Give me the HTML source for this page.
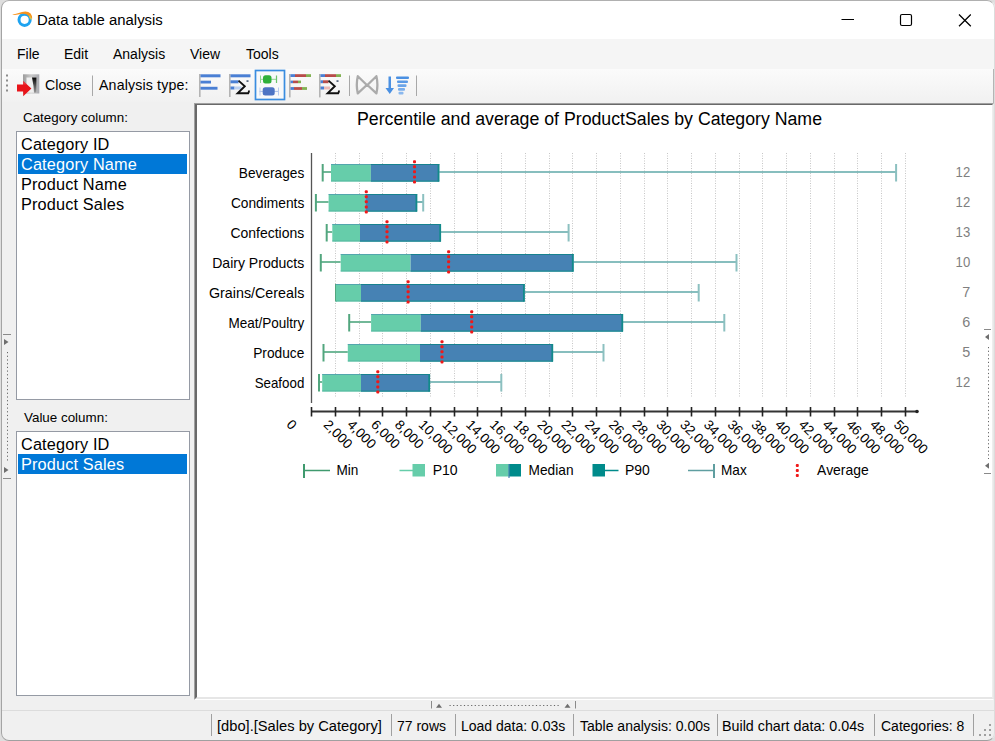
<!DOCTYPE html>
<html><head><meta charset="utf-8">
<style>
*{margin:0;padding:0;box-sizing:border-box}
html,body{width:995px;height:741px;overflow:hidden;background:#dedede}
body{font-family:"Liberation Sans",sans-serif;position:relative;color:#000;background:#dedede}
.a{position:absolute;white-space:nowrap}
#win{position:absolute;left:0;top:0;width:995px;height:741px;background:#f0f0f0;clip-path:inset(0 0 0 1px round 8px)}
#frame{position:absolute;left:1px;top:0;width:994px;height:741px;border:1px solid #a4a4a4;border-top-color:#b0b0b0;border-right-color:#dcdcdc;border-bottom-color:#a0a0a0;border-radius:8px;pointer-events:none}
#title{position:absolute;left:0;top:0;width:995px;height:39px;background:#fff}
#menu{position:absolute;left:0;top:39px;width:995px;height:30px;background:#f5f5f5}
#tool{position:absolute;left:0;top:69px;width:995px;height:33px;background:linear-gradient(#fbfbfb,#f1f1f1)}
.lb{position:absolute;background:#fff;border:1px solid #959aa4}
.it{position:absolute;left:1px;height:20px;width:169px;font-size:16.3px;line-height:20px;padding-left:3px;letter-spacing:0.15px}
.sel{background:#0078d7;color:#fff}
#status{position:absolute;left:0;top:710px;width:995px;height:31px;background:#f0f0f0;border-top:1px solid #dcdcdc}
.st{position:absolute;top:6px;font-size:14px;line-height:18px;color:#000}
.dv{position:absolute;top:3px;width:1px;height:22px;background:#a0a0a0}
</style></head><body>
<div id="win">
 <div id="title">
  <svg class="a" style="left:0;top:0" width="40" height="38" viewBox="0 0 40 38">
   <circle cx="24.6" cy="19.8" r="5.6" stroke="#1ea3f0" stroke-width="3" fill="none"/>
   <path d="M12.2 14.7 Q17 13.6 22 11.9 Q27.5 10.3 30.6 13.6 Q32.2 15.6 32.2 18.6 L29.6 18.2 Q29.2 15.6 26.8 14.4 Q23 13.2 18 14.6 Q14.5 15.4 12.2 14.7 Z" fill="#f7931e"/>
   <path d="M29.8 15.2 Q31.6 17 32 19.8 L29.9 19.2 Q29.6 17.2 28.8 16 Z" fill="#dcc94a" opacity="0.8"/>
  </svg>
  <div class="a" style="left:37px;top:11px;font-size:14.9px;line-height:18px">Data table analysis</div>
  <svg class="a" style="left:838px;top:12px" width="20" height="16"><line x1="3.5" y1="7.5" x2="16" y2="7.5" stroke="#000" stroke-width="1.1"/></svg>
  <svg class="a" style="left:896px;top:13px" width="20" height="16"><rect x="4.5" y="1.5" width="11" height="11" rx="1.5" stroke="#000" stroke-width="1.2" fill="none"/></svg>
  <svg class="a" style="left:955px;top:12px" width="20" height="18"><path d="M4 2.5 L15.8 14.3 M15.8 2.5 L4 14.3" stroke="#000" stroke-width="1.25"/></svg>
 </div>
 <div id="menu">
  <div class="a" style="left:17px;top:6px;font-size:14px;line-height:18px">File</div>
  <div class="a" style="left:64px;top:6px;font-size:14px;line-height:18px">Edit</div>
  <div class="a" style="left:113px;top:6px;font-size:14px;line-height:18px">Analysis</div>
  <div class="a" style="left:190px;top:6px;font-size:14px;line-height:18px">View</div>
  <div class="a" style="left:246px;top:6px;font-size:14px;line-height:18px">Tools</div>
 </div>
 <div id="tool">
  <svg class="a" style="left:0;top:-1px" width="500" height="34" viewBox="0 68 500 34">
   <g fill="#8c8c8c"><rect x="6" y="74.5" width="2" height="2"/><rect x="6" y="79.5" width="2" height="2"/><rect x="6" y="84.5" width="2" height="2"/><rect x="6" y="89.5" width="2" height="2"/></g>
   <!-- close icon -->
   <defs><linearGradient id="dg" x1="0" y1="0" x2="0" y2="1"><stop offset="0" stop-color="#050505"/><stop offset="1" stop-color="#9a9a9a"/></linearGradient>
   <linearGradient id="fg" x1="0" y1="0" x2="1" y2="0"><stop offset="0" stop-color="#9c9c9c"/><stop offset="0.5" stop-color="#c9c9c9"/><stop offset="1" stop-color="#a9aab0"/></linearGradient></defs>
   <rect x="23" y="74.3" width="16.3" height="19.2" fill="url(#fg)"/>
   <rect x="26.5" y="77.5" width="10" height="15.2" fill="#efefef"/>
   <path d="M32 77.5 L36.5 77.5 L36.5 92.7 L34 92.7 L33.5 86 Z" fill="url(#dg)"/>
   <path d="M17 84.6 L23.2 84.6 L23.2 81.1 L31.4 88.6 L23.2 96.2 L23.2 91.6 L17 91.6 Z" fill="#e8141a"/>
   <path d="M17 84.6 L23.2 84.6 L23.2 81.1 L27 84.6 Z" fill="#f04a50" opacity="0.6"/>
   <rect x="92" y="75.5" width="1" height="20.5" fill="#a8a8a8"/>
   <!-- icon1 -->
   <rect x="199" y="74" width="1.6" height="23" fill="#b4b4b4"/>
   <rect x="200.5" y="74.3" width="20" height="3" fill="#4a7fd4"/>
   <rect x="200.5" y="80.7" width="10.5" height="2.8" fill="#4a7fd4"/>
   <rect x="200.5" y="86.8" width="17" height="2.9" fill="#4a7fd4"/>
   <!-- icon2 -->
   <rect x="229" y="74" width="1.6" height="23" fill="#b4b4b4"/>
   <rect x="230.5" y="74.3" width="20" height="3" fill="#4a7fd4"/>
   <rect x="230.5" y="80.3" width="8" height="3" fill="#4a7fd4"/>
   <rect x="230.5" y="86.5" width="4" height="3" fill="#4a7fd4"/><rect x="234.5" y="86.5" width="7" height="3" fill="#bcd0f0"/>
   <path d="M238.5 80.6 L244.8 86.2 L237.6 93.3 L248.2 93.3 Q249 92 249 90.5" stroke="#111" stroke-width="1.9" fill="none" stroke-linejoin="miter"/>
   <rect x="246.5" y="80.2" width="2" height="1.8" fill="#5a6a80"/>
   <!-- icon3 selected -->
   <rect x="255.5" y="70.5" width="29" height="29" fill="#f8f9fa" stroke="#3a8de0" stroke-width="1.7"/>
   <line x1="260" y1="79.3" x2="277" y2="79.3" stroke="#8fd48f" stroke-width="1"/>
   <line x1="260.5" y1="75.5" x2="260.5" y2="83" stroke="#8fd48f" stroke-width="1"/>
   <line x1="276.5" y1="75.5" x2="276.5" y2="83" stroke="#6cc46c" stroke-width="1.2"/>
   <rect x="263" y="75.2" width="8.5" height="8.2" rx="2.5" fill="#2fb03a"/>
   <line x1="259.5" y1="91.4" x2="279" y2="91.4" stroke="#a8bfe8" stroke-width="1"/>
   <line x1="260" y1="87.5" x2="260" y2="95.5" stroke="#b9cbee" stroke-width="1"/>
   <line x1="278.5" y1="87.5" x2="278.5" y2="95.5" stroke="#b9cbee" stroke-width="1"/>
   <rect x="262.7" y="87.3" width="12" height="8.2" rx="2.5" fill="#4d74c4"/>
   <!-- icon4 -->
   <rect x="289" y="74" width="1.6" height="23.4" fill="#b4b4b4"/>
   <rect x="290.5" y="74.2" width="4.5" height="2.8" fill="#4a7fd4"/><rect x="295" y="74.2" width="11" height="2.8" fill="#b84c4a"/><rect x="306" y="74.2" width="5" height="2.8" fill="#82b253"/>
   <rect x="290.5" y="80.6" width="2.5" height="2.6" fill="#4a7fd4"/><rect x="293" y="80.6" width="5" height="2.6" fill="#b84c4a"/><rect x="298" y="80.6" width="3" height="2.6" fill="#82b253"/>
   <rect x="290.5" y="87.1" width="3.5" height="2.8" fill="#4a7fd4"/><rect x="294" y="87.1" width="8" height="2.8" fill="#b84c4a"/><rect x="302" y="87.1" width="5" height="2.8" fill="#82b253"/>
   <!-- icon5 -->
   <rect x="319" y="74" width="1.6" height="23.4" fill="#b4b4b4"/>
   <rect x="320.5" y="74.2" width="4.5" height="2.8" fill="#4a7fd4"/><rect x="325" y="74.2" width="11" height="2.8" fill="#b84c4a"/><rect x="336" y="74.2" width="5" height="2.8" fill="#82b253"/>
   <rect x="320.5" y="80.3" width="2.5" height="2.9" fill="#4a7fd4"/><rect x="323" y="80.3" width="5.5" height="2.9" fill="#b84c4a"/>
   <rect x="320.5" y="86.5" width="3.5" height="3" fill="#4a7fd4"/><rect x="324" y="86.5" width="6" height="3" fill="#ebb9b8"/>
   <path d="M328.5 80.6 L334.8 86.2 L327.6 93.3 L338.2 93.3 Q339 92 339 90.5" stroke="#111" stroke-width="1.9" fill="none" stroke-linejoin="miter"/>
   <rect x="336.5" y="80.2" width="2" height="1.8" fill="#5a6a80"/>
   <rect x="349" y="75.5" width="1" height="20.5" fill="#a8a8a8"/>
   <!-- icon6 -->
   <path d="M357.8 76.2 L366.8 85 L357.8 93.4 Q355.8 84.8 357.8 76.2 Z M376.4 76.2 L367.4 85 L376.4 93.4 Q378.4 84.8 376.4 76.2 Z" stroke="#ababab" stroke-width="2.3" fill="none" stroke-linejoin="round"/>
   <!-- icon7 -->
   <path d="M388.5 76.5 L391 76.5 L391 88 L394 88 L389.75 94 L385.5 88 L388.5 88 Z" fill="#4a90e2"/>
   <rect x="396" y="76.5" width="13" height="2.6" rx="1" fill="#4a90e2"/>
   <rect x="397" y="80.5" width="11" height="2.6" rx="1" fill="#5a9ae6"/>
   <rect x="397.5" y="84.3" width="9" height="2.6" rx="1" fill="#6aa4e9"/>
   <rect x="398" y="88.1" width="7" height="2.6" rx="1" fill="#7aaeeb"/>
   <rect x="398.5" y="91.8" width="5" height="2.6" rx="1" fill="#8ab8ee"/>
   <rect x="416" y="75.5" width="1" height="20.5" fill="#a8a8a8"/>
  </svg>
  <div class="a" style="left:45px;top:7px;font-size:14.2px;line-height:18px">Close</div>
  <div class="a" style="left:99px;top:7px;font-size:14.2px;line-height:18px;letter-spacing:0.15px">Analysis type:</div>
 </div>
 <div class="a" style="left:23px;top:109px;font-size:13.4px;line-height:17px;color:#000">Category column:</div>
 <div class="lb" style="left:16px;top:131px;width:174px;height:269px">
  <div class="it" style="top:2px">Category ID</div>
  <div class="it sel" style="top:22px">Category Name</div>
  <div class="it" style="top:42px">Product Name</div>
  <div class="it" style="top:62px">Product Sales</div>
 </div>
 <div class="a" style="left:24px;top:409px;font-size:13.4px;line-height:17px;color:#000">Value column:</div>
 <div class="lb" style="left:16px;top:431px;width:174px;height:265px">
  <div class="it" style="top:2px">Category ID</div>
  <div class="it sel" style="top:22px">Product Sales</div>
 </div>
 <div id="chart" class="a" style="left:194px;top:103px;width:800px;height:597px;background:#fff;border-top:1px solid #a0a0a0;border-left:1px solid #a0a0a0;border-right:1px solid #e8e8e8;border-bottom:1px solid #fff"><div style="position:absolute;left:0;top:0;right:0;bottom:0;border-top:1px solid #696969;border-left:2px solid #696969;border-right:1px solid #eeeeee;border-bottom:2px solid #e6e6e6"></div></div>
 <!--CHART-->
<svg class="a" style="left:0;top:0" width="995" height="741" viewBox="0 0 995 741" font-family="Liberation Sans, sans-serif">
<text x="357" y="124.6" font-size="17.6" textLength="465" lengthAdjust="spacingAndGlyphs" fill="#000">Percentile and average of ProductSales by Category Name</text>
<line x1="335.5" y1="153" x2="335.5" y2="398" stroke="#c6c6c6" stroke-width="1" stroke-dasharray="1,1.5"/>
<line x1="359.5" y1="153" x2="359.5" y2="398" stroke="#c6c6c6" stroke-width="1" stroke-dasharray="1,1.5"/>
<line x1="382.5" y1="153" x2="382.5" y2="398" stroke="#c6c6c6" stroke-width="1" stroke-dasharray="1,1.5"/>
<line x1="406.5" y1="153" x2="406.5" y2="398" stroke="#c6c6c6" stroke-width="1" stroke-dasharray="1,1.5"/>
<line x1="430.5" y1="153" x2="430.5" y2="398" stroke="#c6c6c6" stroke-width="1" stroke-dasharray="1,1.5"/>
<line x1="454.5" y1="153" x2="454.5" y2="398" stroke="#c6c6c6" stroke-width="1" stroke-dasharray="1,1.5"/>
<line x1="477.5" y1="153" x2="477.5" y2="398" stroke="#c6c6c6" stroke-width="1" stroke-dasharray="1,1.5"/>
<line x1="501.5" y1="153" x2="501.5" y2="398" stroke="#c6c6c6" stroke-width="1" stroke-dasharray="1,1.5"/>
<line x1="525.5" y1="153" x2="525.5" y2="398" stroke="#c6c6c6" stroke-width="1" stroke-dasharray="1,1.5"/>
<line x1="549.5" y1="153" x2="549.5" y2="398" stroke="#c6c6c6" stroke-width="1" stroke-dasharray="1,1.5"/>
<line x1="572.5" y1="153" x2="572.5" y2="398" stroke="#c6c6c6" stroke-width="1" stroke-dasharray="1,1.5"/>
<line x1="596.5" y1="153" x2="596.5" y2="398" stroke="#c6c6c6" stroke-width="1" stroke-dasharray="1,1.5"/>
<line x1="620.5" y1="153" x2="620.5" y2="398" stroke="#c6c6c6" stroke-width="1" stroke-dasharray="1,1.5"/>
<line x1="644.5" y1="153" x2="644.5" y2="398" stroke="#c6c6c6" stroke-width="1" stroke-dasharray="1,1.5"/>
<line x1="667.5" y1="153" x2="667.5" y2="398" stroke="#c6c6c6" stroke-width="1" stroke-dasharray="1,1.5"/>
<line x1="691.5" y1="153" x2="691.5" y2="398" stroke="#c6c6c6" stroke-width="1" stroke-dasharray="1,1.5"/>
<line x1="715.5" y1="153" x2="715.5" y2="398" stroke="#c6c6c6" stroke-width="1" stroke-dasharray="1,1.5"/>
<line x1="739.5" y1="153" x2="739.5" y2="398" stroke="#c6c6c6" stroke-width="1" stroke-dasharray="1,1.5"/>
<line x1="762.5" y1="153" x2="762.5" y2="398" stroke="#c6c6c6" stroke-width="1" stroke-dasharray="1,1.5"/>
<line x1="786.5" y1="153" x2="786.5" y2="398" stroke="#c6c6c6" stroke-width="1" stroke-dasharray="1,1.5"/>
<line x1="810.5" y1="153" x2="810.5" y2="398" stroke="#c6c6c6" stroke-width="1" stroke-dasharray="1,1.5"/>
<line x1="834.5" y1="153" x2="834.5" y2="398" stroke="#c6c6c6" stroke-width="1" stroke-dasharray="1,1.5"/>
<line x1="857.5" y1="153" x2="857.5" y2="398" stroke="#c6c6c6" stroke-width="1" stroke-dasharray="1,1.5"/>
<line x1="881.5" y1="153" x2="881.5" y2="398" stroke="#c6c6c6" stroke-width="1" stroke-dasharray="1,1.5"/>
<line x1="905.5" y1="153" x2="905.5" y2="398" stroke="#c6c6c6" stroke-width="1" stroke-dasharray="1,1.5"/>
<line x1="311.5" y1="153" x2="311.5" y2="403" stroke="#555" stroke-width="1.3"/>
<line x1="311" y1="411.5" x2="917" y2="411.5" stroke="#333" stroke-width="2"/>
<line x1="311.5" y1="407" x2="311.5" y2="416.5" stroke="#222" stroke-width="1.6"/>
<line x1="335.5" y1="407" x2="335.5" y2="416.5" stroke="#222" stroke-width="1.6"/>
<line x1="359.5" y1="407" x2="359.5" y2="416.5" stroke="#222" stroke-width="1.6"/>
<line x1="382.5" y1="407" x2="382.5" y2="416.5" stroke="#222" stroke-width="1.6"/>
<line x1="406.5" y1="407" x2="406.5" y2="416.5" stroke="#222" stroke-width="1.6"/>
<line x1="430.5" y1="407" x2="430.5" y2="416.5" stroke="#222" stroke-width="1.6"/>
<line x1="454.5" y1="407" x2="454.5" y2="416.5" stroke="#222" stroke-width="1.6"/>
<line x1="477.5" y1="407" x2="477.5" y2="416.5" stroke="#222" stroke-width="1.6"/>
<line x1="501.5" y1="407" x2="501.5" y2="416.5" stroke="#222" stroke-width="1.6"/>
<line x1="525.5" y1="407" x2="525.5" y2="416.5" stroke="#222" stroke-width="1.6"/>
<line x1="549.5" y1="407" x2="549.5" y2="416.5" stroke="#222" stroke-width="1.6"/>
<line x1="572.5" y1="407" x2="572.5" y2="416.5" stroke="#222" stroke-width="1.6"/>
<line x1="596.5" y1="407" x2="596.5" y2="416.5" stroke="#222" stroke-width="1.6"/>
<line x1="620.5" y1="407" x2="620.5" y2="416.5" stroke="#222" stroke-width="1.6"/>
<line x1="644.5" y1="407" x2="644.5" y2="416.5" stroke="#222" stroke-width="1.6"/>
<line x1="667.5" y1="407" x2="667.5" y2="416.5" stroke="#222" stroke-width="1.6"/>
<line x1="691.5" y1="407" x2="691.5" y2="416.5" stroke="#222" stroke-width="1.6"/>
<line x1="715.5" y1="407" x2="715.5" y2="416.5" stroke="#222" stroke-width="1.6"/>
<line x1="739.5" y1="407" x2="739.5" y2="416.5" stroke="#222" stroke-width="1.6"/>
<line x1="762.5" y1="407" x2="762.5" y2="416.5" stroke="#222" stroke-width="1.6"/>
<line x1="786.5" y1="407" x2="786.5" y2="416.5" stroke="#222" stroke-width="1.6"/>
<line x1="810.5" y1="407" x2="810.5" y2="416.5" stroke="#222" stroke-width="1.6"/>
<line x1="834.5" y1="407" x2="834.5" y2="416.5" stroke="#222" stroke-width="1.6"/>
<line x1="857.5" y1="407" x2="857.5" y2="416.5" stroke="#222" stroke-width="1.6"/>
<line x1="881.5" y1="407" x2="881.5" y2="416.5" stroke="#222" stroke-width="1.6"/>
<line x1="905.5" y1="407" x2="905.5" y2="416.5" stroke="#222" stroke-width="1.6"/>
<circle cx="917" cy="411.5" r="1.8" fill="#222"/>
<g font-size="13.6" fill="#000">
<text transform="translate(289,422) rotate(45)" dominant-baseline="central">0</text>
<text transform="translate(322.8,425.5) rotate(45)">2,000</text>
<text transform="translate(346.5,425.5) rotate(45)">4,000</text>
<text transform="translate(370.3,425.5) rotate(45)">6,000</text>
<text transform="translate(394.0,425.5) rotate(45)">8,000</text>
<text transform="translate(417.8,425.5) rotate(45)">10,000</text>
<text transform="translate(441.6,425.5) rotate(45)">12,000</text>
<text transform="translate(465.3,425.5) rotate(45)">14,000</text>
<text transform="translate(489.1,425.5) rotate(45)">16,000</text>
<text transform="translate(512.8,425.5) rotate(45)">18,000</text>
<text transform="translate(536.6,425.5) rotate(45)">20,000</text>
<text transform="translate(560.4,425.5) rotate(45)">22,000</text>
<text transform="translate(584.1,425.5) rotate(45)">24,000</text>
<text transform="translate(607.9,425.5) rotate(45)">26,000</text>
<text transform="translate(631.6,425.5) rotate(45)">28,000</text>
<text transform="translate(655.4,425.5) rotate(45)">30,000</text>
<text transform="translate(679.2,425.5) rotate(45)">32,000</text>
<text transform="translate(702.9,425.5) rotate(45)">34,000</text>
<text transform="translate(726.7,425.5) rotate(45)">36,000</text>
<text transform="translate(750.4,425.5) rotate(45)">38,000</text>
<text transform="translate(774.2,425.5) rotate(45)">40,000</text>
<text transform="translate(798.0,425.5) rotate(45)">42,000</text>
<text transform="translate(821.7,425.5) rotate(45)">44,000</text>
<text transform="translate(845.5,425.5) rotate(45)">46,000</text>
<text transform="translate(869.2,425.5) rotate(45)">48,000</text>
<text transform="translate(893.0,425.5) rotate(45)">50,000</text>
</g>
<text x="238.8" y="177.5" font-size="15" textLength="65.5" lengthAdjust="spacingAndGlyphs" fill="#000">Beverages</text>
<text x="955.6" y="176.9" font-size="15" textLength="14.6" lengthAdjust="spacingAndGlyphs" fill="#7f7f7f">12</text>
<line x1="439.2" y1="172" x2="896.1" y2="172" stroke="#5fa9a8" stroke-width="1.7"/>
<line x1="896.1" y1="164" x2="896.1" y2="181.5" stroke="#8cc0c0" stroke-width="2"/>
<line x1="322.7" y1="172" x2="331.0" y2="172" stroke="#72b898" stroke-width="2"/>
<line x1="322.7" y1="164" x2="322.7" y2="181.5" stroke="#52a67e" stroke-width="2"/>
<rect x="331.0" y="164" width="39.89999999999998" height="17.5" fill="#66cdaa"/>
<rect x="370.9" y="164" width="68.30000000000001" height="17.5" fill="#4682b4"/>
<rect x="331.0" y="164" width="39.89999999999998" height="1" fill="#4f9cae" opacity="0.8"/>
<rect x="331.0" y="180.5" width="39.89999999999998" height="1" fill="#4fb09e" opacity="0.8"/>
<rect x="370.9" y="164" width="68.30000000000001" height="1" fill="#17828f"/>
<rect x="370.9" y="180.5" width="68.30000000000001" height="1.2" fill="#1a8a8f"/>
<rect x="437.59999999999997" y="164" width="1.8" height="17.5" fill="#128a8a"/>
<rect x="413.0" y="160.25" width="3" height="3" rx="1" fill="#f01818"/>
<rect x="413.0" y="165.31" width="3" height="3" rx="1" fill="#f01818"/>
<rect x="413.0" y="170.37" width="3" height="3" rx="1" fill="#f01818"/>
<rect x="413.0" y="175.43" width="3" height="3" rx="1" fill="#f01818"/>
<rect x="413.0" y="180.49" width="3" height="3" rx="1" fill="#f01818"/>
<text x="230.9" y="207.5" font-size="15" textLength="73.4" lengthAdjust="spacingAndGlyphs" fill="#000">Condiments</text>
<text x="955.6" y="206.9" font-size="15" textLength="14.6" lengthAdjust="spacingAndGlyphs" fill="#7f7f7f">12</text>
<line x1="417.1" y1="202" x2="423.2" y2="202" stroke="#5fa9a8" stroke-width="1.7"/>
<line x1="423.2" y1="194" x2="423.2" y2="211.5" stroke="#8cc0c0" stroke-width="2"/>
<line x1="315.9" y1="202" x2="328.6" y2="202" stroke="#72b898" stroke-width="2"/>
<line x1="315.9" y1="194" x2="315.9" y2="211.5" stroke="#52a67e" stroke-width="2"/>
<rect x="328.6" y="194" width="36.69999999999999" height="17.5" fill="#66cdaa"/>
<rect x="365.3" y="194" width="51.80000000000001" height="17.5" fill="#4682b4"/>
<rect x="328.6" y="194" width="36.69999999999999" height="1" fill="#4f9cae" opacity="0.8"/>
<rect x="328.6" y="210.5" width="36.69999999999999" height="1" fill="#4fb09e" opacity="0.8"/>
<rect x="365.3" y="194" width="51.80000000000001" height="1" fill="#17828f"/>
<rect x="365.3" y="210.5" width="51.80000000000001" height="1.2" fill="#1a8a8f"/>
<rect x="415.5" y="194" width="1.8" height="17.5" fill="#128a8a"/>
<rect x="364.8" y="190.25" width="3" height="3" rx="1" fill="#f01818"/>
<rect x="364.8" y="195.31" width="3" height="3" rx="1" fill="#f01818"/>
<rect x="364.8" y="200.37" width="3" height="3" rx="1" fill="#f01818"/>
<rect x="364.8" y="205.43" width="3" height="3" rx="1" fill="#f01818"/>
<rect x="364.8" y="210.49" width="3" height="3" rx="1" fill="#f01818"/>
<text x="230.4" y="237.5" font-size="15" textLength="73.9" lengthAdjust="spacingAndGlyphs" fill="#000">Confections</text>
<text x="955.6" y="236.9" font-size="15" textLength="14.6" lengthAdjust="spacingAndGlyphs" fill="#7f7f7f">13</text>
<line x1="440.9" y1="232" x2="568.6" y2="232" stroke="#5fa9a8" stroke-width="1.7"/>
<line x1="568.6" y1="224" x2="568.6" y2="241.5" stroke="#8cc0c0" stroke-width="2"/>
<line x1="326.7" y1="232" x2="332.3" y2="232" stroke="#72b898" stroke-width="2"/>
<line x1="326.7" y1="224" x2="326.7" y2="241.5" stroke="#52a67e" stroke-width="2"/>
<rect x="332.3" y="224" width="27.69999999999999" height="17.5" fill="#66cdaa"/>
<rect x="360.0" y="224" width="80.89999999999998" height="17.5" fill="#4682b4"/>
<rect x="332.3" y="224" width="27.69999999999999" height="1" fill="#4f9cae" opacity="0.8"/>
<rect x="332.3" y="240.5" width="27.69999999999999" height="1" fill="#4fb09e" opacity="0.8"/>
<rect x="360.0" y="224" width="80.89999999999998" height="1" fill="#17828f"/>
<rect x="360.0" y="240.5" width="80.89999999999998" height="1.2" fill="#1a8a8f"/>
<rect x="439.29999999999995" y="224" width="1.8" height="17.5" fill="#128a8a"/>
<rect x="385.5" y="220.25" width="3" height="3" rx="1" fill="#f01818"/>
<rect x="385.5" y="225.31" width="3" height="3" rx="1" fill="#f01818"/>
<rect x="385.5" y="230.37" width="3" height="3" rx="1" fill="#f01818"/>
<rect x="385.5" y="235.43" width="3" height="3" rx="1" fill="#f01818"/>
<rect x="385.5" y="240.49" width="3" height="3" rx="1" fill="#f01818"/>
<text x="212.2" y="267.5" font-size="15" textLength="92.1" lengthAdjust="spacingAndGlyphs" fill="#000">Dairy Products</text>
<text x="955.6" y="266.9" font-size="15" textLength="14.6" lengthAdjust="spacingAndGlyphs" fill="#7f7f7f">10</text>
<line x1="573.5" y1="262" x2="736.5" y2="262" stroke="#5fa9a8" stroke-width="1.7"/>
<line x1="736.5" y1="254" x2="736.5" y2="271.5" stroke="#8cc0c0" stroke-width="2"/>
<line x1="320.8" y1="262" x2="340.7" y2="262" stroke="#72b898" stroke-width="2"/>
<line x1="320.8" y1="254" x2="320.8" y2="271.5" stroke="#52a67e" stroke-width="2"/>
<rect x="340.7" y="254" width="69.90000000000003" height="17.5" fill="#66cdaa"/>
<rect x="410.6" y="254" width="162.89999999999998" height="17.5" fill="#4682b4"/>
<rect x="340.7" y="254" width="69.90000000000003" height="1" fill="#4f9cae" opacity="0.8"/>
<rect x="340.7" y="270.5" width="69.90000000000003" height="1" fill="#4fb09e" opacity="0.8"/>
<rect x="410.6" y="254" width="162.89999999999998" height="1" fill="#17828f"/>
<rect x="410.6" y="270.5" width="162.89999999999998" height="1.2" fill="#1a8a8f"/>
<rect x="571.9" y="254" width="1.8" height="17.5" fill="#128a8a"/>
<rect x="447.1" y="250.25" width="3" height="3" rx="1" fill="#f01818"/>
<rect x="447.1" y="255.31" width="3" height="3" rx="1" fill="#f01818"/>
<rect x="447.1" y="260.37" width="3" height="3" rx="1" fill="#f01818"/>
<rect x="447.1" y="265.43" width="3" height="3" rx="1" fill="#f01818"/>
<rect x="447.1" y="270.49" width="3" height="3" rx="1" fill="#f01818"/>
<text x="209.0" y="297.5" font-size="15" textLength="95.3" lengthAdjust="spacingAndGlyphs" fill="#000">Grains/Cereals</text>
<text x="962.2" y="296.9" font-size="15" textLength="8.0" lengthAdjust="spacingAndGlyphs" fill="#7f7f7f">7</text>
<line x1="524.6" y1="292" x2="698.7" y2="292" stroke="#5fa9a8" stroke-width="1.7"/>
<line x1="698.7" y1="284" x2="698.7" y2="301.5" stroke="#8cc0c0" stroke-width="2"/>
<line x1="336.0" y1="292" x2="336.0" y2="292" stroke="#72b898" stroke-width="2"/>
<line x1="336.0" y1="284" x2="336.0" y2="301.5" stroke="#52a67e" stroke-width="2"/>
<rect x="336.0" y="284" width="25.0" height="17.5" fill="#66cdaa"/>
<rect x="361.0" y="284" width="163.60000000000002" height="17.5" fill="#4682b4"/>
<rect x="336.0" y="284" width="25.0" height="1" fill="#4f9cae" opacity="0.8"/>
<rect x="336.0" y="300.5" width="25.0" height="1" fill="#4fb09e" opacity="0.8"/>
<rect x="361.0" y="284" width="163.60000000000002" height="1" fill="#17828f"/>
<rect x="361.0" y="300.5" width="163.60000000000002" height="1.2" fill="#1a8a8f"/>
<rect x="523.0" y="284" width="1.8" height="17.5" fill="#128a8a"/>
<rect x="406.6" y="280.25" width="3" height="3" rx="1" fill="#f01818"/>
<rect x="406.6" y="285.31" width="3" height="3" rx="1" fill="#f01818"/>
<rect x="406.6" y="290.37" width="3" height="3" rx="1" fill="#f01818"/>
<rect x="406.6" y="295.43" width="3" height="3" rx="1" fill="#f01818"/>
<rect x="406.6" y="300.49" width="3" height="3" rx="1" fill="#f01818"/>
<text x="228.4" y="327.5" font-size="15" textLength="75.9" lengthAdjust="spacingAndGlyphs" fill="#000">Meat/Poultry</text>
<text x="962.2" y="326.9" font-size="15" textLength="8.0" lengthAdjust="spacingAndGlyphs" fill="#7f7f7f">6</text>
<line x1="623.0" y1="322" x2="724.3" y2="322" stroke="#5fa9a8" stroke-width="1.7"/>
<line x1="724.3" y1="314" x2="724.3" y2="331.5" stroke="#8cc0c0" stroke-width="2"/>
<line x1="349.2" y1="322" x2="371.1" y2="322" stroke="#72b898" stroke-width="2"/>
<line x1="349.2" y1="314" x2="349.2" y2="331.5" stroke="#52a67e" stroke-width="2"/>
<rect x="371.1" y="314" width="49.69999999999999" height="17.5" fill="#66cdaa"/>
<rect x="420.8" y="314" width="202.2" height="17.5" fill="#4682b4"/>
<rect x="371.1" y="314" width="49.69999999999999" height="1" fill="#4f9cae" opacity="0.8"/>
<rect x="371.1" y="330.5" width="49.69999999999999" height="1" fill="#4fb09e" opacity="0.8"/>
<rect x="420.8" y="314" width="202.2" height="1" fill="#17828f"/>
<rect x="420.8" y="330.5" width="202.2" height="1.2" fill="#1a8a8f"/>
<rect x="621.4" y="314" width="1.8" height="17.5" fill="#128a8a"/>
<rect x="470.2" y="310.25" width="3" height="3" rx="1" fill="#f01818"/>
<rect x="470.2" y="315.31" width="3" height="3" rx="1" fill="#f01818"/>
<rect x="470.2" y="320.37" width="3" height="3" rx="1" fill="#f01818"/>
<rect x="470.2" y="325.43" width="3" height="3" rx="1" fill="#f01818"/>
<rect x="470.2" y="330.49" width="3" height="3" rx="1" fill="#f01818"/>
<text x="253.2" y="357.5" font-size="15" textLength="51.1" lengthAdjust="spacingAndGlyphs" fill="#000">Produce</text>
<text x="962.2" y="356.9" font-size="15" textLength="8.0" lengthAdjust="spacingAndGlyphs" fill="#7f7f7f">5</text>
<line x1="553.0" y1="352" x2="603.5" y2="352" stroke="#5fa9a8" stroke-width="1.7"/>
<line x1="603.5" y1="344" x2="603.5" y2="361.5" stroke="#8cc0c0" stroke-width="2"/>
<line x1="323.5" y1="352" x2="347.8" y2="352" stroke="#72b898" stroke-width="2"/>
<line x1="323.5" y1="344" x2="323.5" y2="361.5" stroke="#52a67e" stroke-width="2"/>
<rect x="347.8" y="344" width="72.19999999999999" height="17.5" fill="#66cdaa"/>
<rect x="420.0" y="344" width="133.0" height="17.5" fill="#4682b4"/>
<rect x="347.8" y="344" width="72.19999999999999" height="1" fill="#4f9cae" opacity="0.8"/>
<rect x="347.8" y="360.5" width="72.19999999999999" height="1" fill="#4fb09e" opacity="0.8"/>
<rect x="420.0" y="344" width="133.0" height="1" fill="#17828f"/>
<rect x="420.0" y="360.5" width="133.0" height="1.2" fill="#1a8a8f"/>
<rect x="551.4" y="344" width="1.8" height="17.5" fill="#128a8a"/>
<rect x="440.5" y="340.25" width="3" height="3" rx="1" fill="#f01818"/>
<rect x="440.5" y="345.31" width="3" height="3" rx="1" fill="#f01818"/>
<rect x="440.5" y="350.37" width="3" height="3" rx="1" fill="#f01818"/>
<rect x="440.5" y="355.43" width="3" height="3" rx="1" fill="#f01818"/>
<rect x="440.5" y="360.49" width="3" height="3" rx="1" fill="#f01818"/>
<text x="254.7" y="387.5" font-size="15" textLength="49.6" lengthAdjust="spacingAndGlyphs" fill="#000">Seafood</text>
<text x="955.6" y="386.9" font-size="15" textLength="14.6" lengthAdjust="spacingAndGlyphs" fill="#7f7f7f">12</text>
<line x1="429.9" y1="382" x2="501.3" y2="382" stroke="#5fa9a8" stroke-width="1.7"/>
<line x1="501.3" y1="374" x2="501.3" y2="391.5" stroke="#8cc0c0" stroke-width="2"/>
<line x1="319.0" y1="382" x2="322.2" y2="382" stroke="#72b898" stroke-width="2"/>
<line x1="319.0" y1="374" x2="319.0" y2="391.5" stroke="#52a67e" stroke-width="2"/>
<rect x="322.2" y="374" width="38.80000000000001" height="17.5" fill="#66cdaa"/>
<rect x="361.0" y="374" width="68.89999999999998" height="17.5" fill="#4682b4"/>
<rect x="322.2" y="374" width="38.80000000000001" height="1" fill="#4f9cae" opacity="0.8"/>
<rect x="322.2" y="390.5" width="38.80000000000001" height="1" fill="#4fb09e" opacity="0.8"/>
<rect x="361.0" y="374" width="68.89999999999998" height="1" fill="#17828f"/>
<rect x="361.0" y="390.5" width="68.89999999999998" height="1.2" fill="#1a8a8f"/>
<rect x="428.29999999999995" y="374" width="1.8" height="17.5" fill="#128a8a"/>
<rect x="376.3" y="370.25" width="3" height="3" rx="1" fill="#f01818"/>
<rect x="376.3" y="375.31" width="3" height="3" rx="1" fill="#f01818"/>
<rect x="376.3" y="380.37" width="3" height="3" rx="1" fill="#f01818"/>
<rect x="376.3" y="385.43" width="3" height="3" rx="1" fill="#f01818"/>
<rect x="376.3" y="390.49" width="3" height="3" rx="1" fill="#f01818"/>
<line x1="304" y1="464" x2="304" y2="478" stroke="#3f9a6e" stroke-width="2"/>
<line x1="304" y1="470.5" x2="330" y2="470.5" stroke="#3f9a6e" stroke-width="1.5"/>
<text x="336.5" y="475.3" font-size="15" textLength="21.9" lengthAdjust="spacingAndGlyphs">Min</text>
<line x1="399.5" y1="470.5" x2="413" y2="470.5" stroke="#66cdaa" stroke-width="1.5"/>
<rect x="412.5" y="464" width="12.5" height="12.5" fill="#66cdaa"/>
<text x="432.7" y="475.3" font-size="15" textLength="25.0" lengthAdjust="spacingAndGlyphs">P10</text>
<rect x="496" y="464" width="13" height="12.5" fill="#66cdaa"/>
<rect x="509" y="464" width="12" height="12.5" fill="#008b8b"/>
<line x1="509" y1="464" x2="509" y2="478" stroke="#4682b4" stroke-width="1.2"/>
<text x="528.6" y="475.3" font-size="15" textLength="44.9" lengthAdjust="spacingAndGlyphs">Median</text>
<rect x="592.5" y="464" width="12.5" height="12.5" fill="#008b8b"/>
<line x1="604" y1="470.5" x2="618.5" y2="470.5" stroke="#008b8b" stroke-width="1.5"/>
<text x="624.9" y="475.3" font-size="15" textLength="24.8" lengthAdjust="spacingAndGlyphs">P90</text>
<line x1="688" y1="470.5" x2="714" y2="470.5" stroke="#5f9ea0" stroke-width="1.5"/>
<line x1="714" y1="464" x2="714" y2="478" stroke="#5f9ea0" stroke-width="2"/>
<text x="721.0" y="475.3" font-size="15" textLength="25.7" lengthAdjust="spacingAndGlyphs">Max</text>
<rect x="795.8" y="464" width="3" height="3" rx="1" fill="#f01818"/>
<rect x="795.8" y="469" width="3" height="3" rx="1" fill="#f01818"/>
<rect x="795.8" y="474" width="3" height="3" rx="1" fill="#f01818"/>
<text x="817.1" y="475.3" font-size="15" textLength="51.6" lengthAdjust="spacingAndGlyphs">Average</text>
</svg>
<!--/CHART-->
 <div id="status">
  <div class="dv" style="left:211px"></div>
  <div class="st" style="left:217px;font-size:14.7px">[dbo].[Sales by Category]</div>
  <div class="dv" style="left:391px"></div>
  <div class="st" style="left:397px">77 rows</div>
  <div class="dv" style="left:455px"></div>
  <div class="st" style="left:461px">Load data: 0.03s</div>
  <div class="dv" style="left:573px"></div>
  <div class="st" style="left:580px">Table analysis: 0.00s</div>
  <div class="dv" style="left:717px"></div>
  <div class="st" style="left:722px;font-size:14.3px">Build chart data: 0.04s</div>
  <div class="dv" style="left:874px"></div>
  <div class="st" style="left:881px">Categories: 8</div>
  <div class="dv" style="left:973px"></div>
 </div>
</div>
<svg class="a" style="left:0;top:0" width="995" height="741" viewBox="0 0 995 741">
  <g fill="none" stroke="#8a8a8a" stroke-width="1">
   <line x1="3" y1="334.5" x2="11" y2="334.5"/>
   <line x1="3" y1="478.5" x2="11" y2="478.5"/>
   <line x1="7.5" y1="352" x2="7.5" y2="463" stroke-dasharray="1.2,2.5" stroke="#666"/>
   <line x1="984" y1="329.5" x2="991" y2="329.5"/>
   <line x1="984" y1="473.5" x2="991" y2="473.5"/>
   <line x1="988.5" y1="347" x2="988.5" y2="459" stroke-dasharray="1.2,2.5" stroke="#666"/>
   <line x1="431.5" y1="701" x2="431.5" y2="708.5"/>
   <line x1="575.5" y1="701" x2="575.5" y2="708.5"/>
   <line x1="449.5" y1="705.5" x2="560" y2="705.5" stroke-dasharray="1.2,2.4" stroke="#666"/>
  </g>
  <g fill="#6e6e6e">
   <path d="M4 339 L8.5 342 L4 345 Z"/>
   <path d="M4 467 L8.5 470 L4 473 Z"/>
   <path d="M989 334 L985 337 L989 340 Z"/>
   <path d="M989 462.7 L985 465.7 L989 468.7 Z"/>
   <path d="M436 707.7 L439 703.7 L442 707.7 Z"/>
   <path d="M564.5 707.7 L567.5 703.7 L570.5 707.7 Z"/>
  </g>
  <g fill="#a0a0a0">
   <rect x="989" y="724" width="2" height="2"/>
   <rect x="984" y="729" width="2" height="2"/><rect x="989" y="729" width="2" height="2"/>
   <rect x="979" y="734" width="2" height="2"/><rect x="984" y="734" width="2" height="2"/><rect x="989" y="734" width="2" height="2"/>
  </g>
 </svg>
<div class="a" style="left:993px;top:69px;width:2px;height:34px;background:linear-gradient(90deg,#c8c8c8,#7a7a7a)"></div>
<div id="frame"></div>
</body></html>
